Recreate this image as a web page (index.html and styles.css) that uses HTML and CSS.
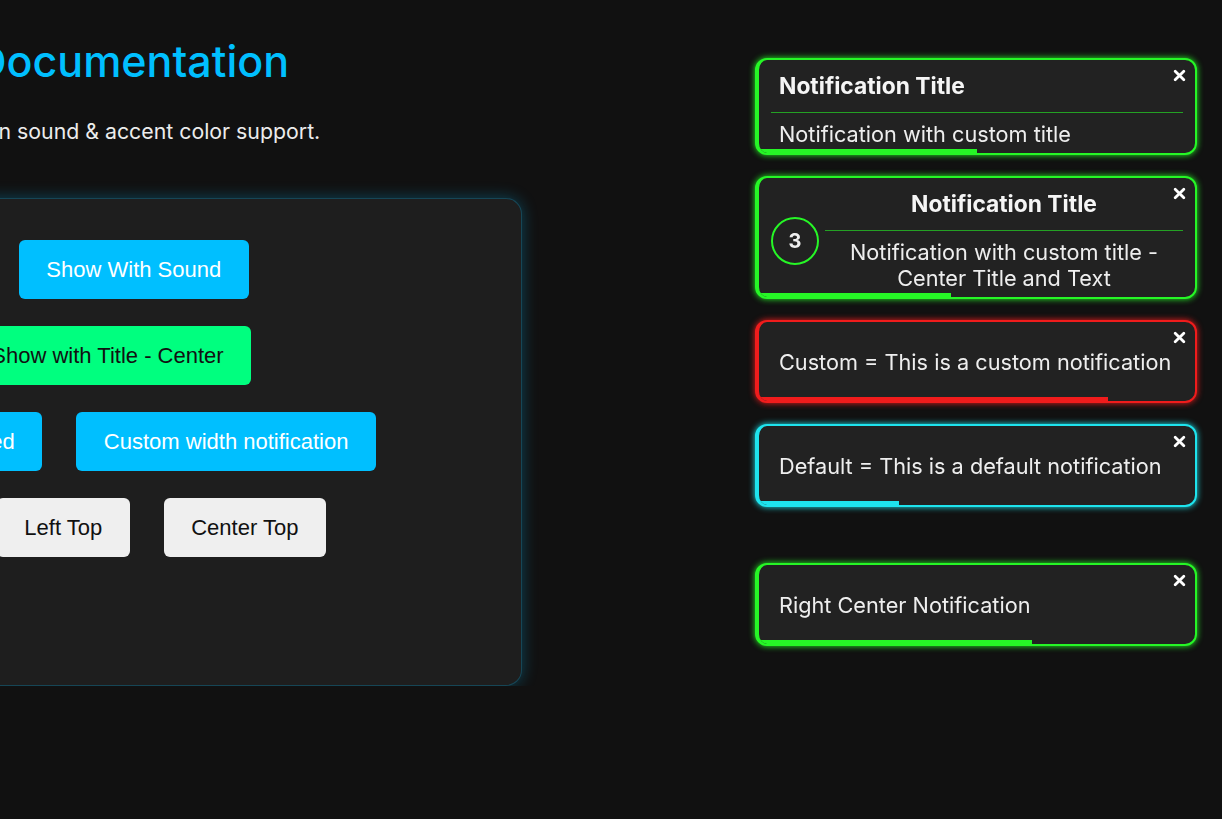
FILE: index.html
```html
<!DOCTYPE html>
<html lang="en">
<head>
<meta charset="utf-8">
<meta name="viewport" content="width=device-width, initial-scale=1">
<title>Notify Documentation</title>
<link rel="stylesheet" href="styles.css">
</head>
<body>

<main class="page">
    <header class="intro">
        <h1>Notify Documentation</h1>
        <p>Alert with built-in sound &amp; accent color support.</p>
    </header>

    <section class="demo">
        <div class="btn-row">
            <button class="btn btn-blue">Show Default</button>
            <button class="btn btn-blue">Show With Sound</button>
        </div>
        <div class="btn-row">
            <button class="btn btn-green">Custom</button>
            <button class="btn btn-green">Show with Title - Center</button>
        </div>
        <div class="btn-row">
            <button class="btn btn-blue">Autoclose Disabled</button>
            <button class="btn btn-blue">Custom width notification</button>
        </div>
        <div class="btn-row">
            <button class="btn btn-gray">Left Center</button>
            <button class="btn btn-gray">Left Top</button>
            <button class="btn btn-gray">Center Top</button>
        </div>
    </section>
</main>

<!-- notifications (right top stack) -->
<div class="toast-stack">
    <div class="toast toast-green">
        <button class="toast-close" aria-label="Close"><svg viewBox="0 0 12 12" width="13" height="13"><path d="M2 2L10 10M10 2L2 10" stroke="currentColor" stroke-width="2.6" stroke-linecap="round"/></svg></button>
        <div class="toast-title">Notification Title</div>
        <div class="toast-msg">Notification with custom title</div>
        <div class="toast-progress" style="width:50%"></div>
    </div>

    <div class="toast toast-green toast-center">
        <button class="toast-close" aria-label="Close"><svg viewBox="0 0 12 12" width="13" height="13"><path d="M2 2L10 10M10 2L2 10" stroke="currentColor" stroke-width="2.6" stroke-linecap="round"/></svg></button>
        <div class="toast-row">
            <div class="toast-count">3</div>
            <div class="toast-body">
                <div class="toast-title">Notification Title</div>
                <div class="toast-msg">Notification with custom title - Center Title and Text</div>
            </div>
        </div>
        <div class="toast-progress" style="width:44%"></div>
    </div>

    <div class="toast toast-red toast-simple">
        <button class="toast-close" aria-label="Close"><svg viewBox="0 0 12 12" width="13" height="13"><path d="M2 2L10 10M10 2L2 10" stroke="currentColor" stroke-width="2.6" stroke-linecap="round"/></svg></button>
        <div class="toast-msg">Custom = This is a custom notification</div>
        <div class="toast-progress" style="width:80%"></div>
    </div>

    <div class="toast toast-cyan toast-simple">
        <button class="toast-close" aria-label="Close"><svg viewBox="0 0 12 12" width="13" height="13"><path d="M2 2L10 10M10 2L2 10" stroke="currentColor" stroke-width="2.6" stroke-linecap="round"/></svg></button>
        <div class="toast-msg">Default = This is a default notification</div>
        <div class="toast-progress" style="width:32%"></div>
    </div>
</div>

<!-- right center position -->
<div class="toast-stack toast-rc">
    <div class="toast toast-green toast-simple">
        <button class="toast-close" aria-label="Close"><svg viewBox="0 0 12 12" width="13" height="13"><path d="M2 2L10 10M10 2L2 10" stroke="currentColor" stroke-width="2.6" stroke-linecap="round"/></svg></button>
        <div class="toast-msg">Right Center Notification</div>
        <div class="toast-progress" style="width:62.5%"></div>
    </div>
</div>

</body>
</html>
```

FILE: styles.css
```css
* {
    box-sizing: border-box;
}

body {
    margin: 0;
    background: #111;
    color: #eee;
    font-family: Inter, "Noto Sans", sans-serif;
    overflow: hidden;
}

.page {
    width: 759px;
    margin-left: -237px;
    padding-top: 35px;
}

.intro {
    padding-left: 76px;
}

.intro h1 {
    margin: 0;
    font-size: 43px;
    font-weight: 500;
    color: #00bfff;
}

.intro p {
    margin: 31px 0 0;
    font-size: 21.3px;
    color: #ececec;
    white-space: nowrap;
}

.demo {
    margin-top: 54px;
    background: #1e1e1e;
    border: 1px solid rgba(0, 191, 255, 0.25);
    border-radius: 16px;
    box-shadow: 0 0 16px rgba(0, 191, 255, 0.3);
    padding: 41px 35px 128px;
    display: flex;
    flex-direction: column;
    gap: 27px;
}

.btn-row {
    display: flex;
    gap: 34px;
}

.btn {
    flex: none;
    font-family: "Liberation Sans", Arial, sans-serif;
    font-size: 22px;
    padding: 16.5px 27.5px;
    border: none;
    border-radius: 6px;
    white-space: nowrap;
    cursor: pointer;
}

.btn-blue {
    background: #00bfff;
    color: #fff;
}

.btn-green {
    background: #00ff7f;
    color: #111;
}

.btn-gray {
    background: #efefef;
    color: #111;
}

/* notifications */
.toast-stack {
    position: fixed;
    top: 58px;
    right: 25px;
    width: 442px;
    display: flex;
    flex-direction: column;
    gap: 21px;
}

.toast-rc {
    top: 563px;
}

.toast {
    position: relative;
    background: #222;
    border: 2px solid var(--accent);
    border-left-width: 4px;
    border-radius: 12px;
    box-shadow: 0 0 6px var(--accent);
    padding: 12px 12px 6px;
    overflow: hidden;
    font-size: 21.7px;
    line-height: 26px;
    color: #eee;
}

.toast-green { --accent: #26f626; }
.toast-red { --accent: #f01c1c; }
.toast-cyan { --accent: #1ee4ee; }

.toast-title {
    padding: 0 8px 13px;
    border-bottom: 1px solid rgba(38, 246, 38, 0.6);
    font-size: 22.8px;
    line-height: 27px;
    font-weight: 700;
    color: #f5f5f5;
}

.toast-msg {
    padding: 8px 8px 0;
}

.toast-simple .toast-msg {
    padding: 15px 8px 20px;
}

.toast-center .toast-title,
.toast-center .toast-msg {
    text-align: center;
}

.toast-row {
    display: flex;
    align-items: center;
    gap: 6px;
}

.toast-count {
    flex: none;
    width: 48px;
    height: 48px;
    border: 2px solid var(--accent);
    border-radius: 50%;
    display: flex;
    align-items: center;
    justify-content: center;
    font-size: 20px;
    line-height: 1;
    font-weight: 700;
}

.toast-body {
    flex: 1;
    min-width: 0;
}

.toast-close {
    position: absolute;
    top: 9px;
    right: 9px;
    display: flex;
    padding: 0;
    border: none;
    background: none;
    color: #fff;
    cursor: pointer;
}

.toast-progress {
    position: absolute;
    left: 0;
    bottom: 0;
    height: 4px;
    background: var(--accent);
}
```
